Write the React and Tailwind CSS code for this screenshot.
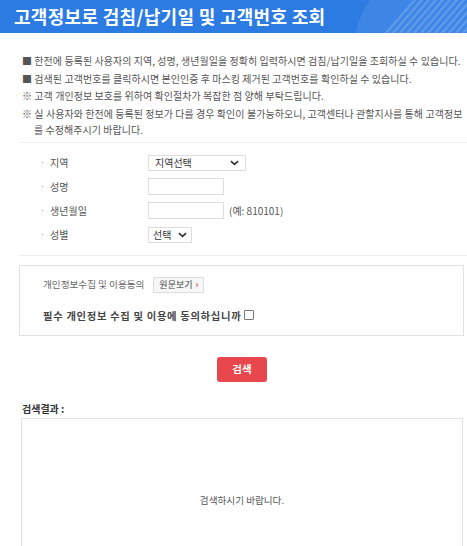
import React from "react";

const font = { fontFamily: '"Noto Sans CJK KR", "Noto Sans", sans-serif' };

function Chevron({ className = "" }) {
  return (
    <svg viewBox="0 0 10 6" className={className} width="9" height="6">
      <path d="M1 1l4 3.5L9 1" fill="none" stroke="#333" strokeWidth="1.8" />
    </svg>
  );
}

function Header() {
  return (
    <div className="relative h-[33px] bg-[#2b7be3] overflow-hidden flex items-center pl-[14px]">
      <svg className="absolute left-0 top-0" width="467" height="33" viewBox="0 0 467 33">
        <circle cx="430" cy="45" r="75" fill="#ffffff" fillOpacity="0.09" />
        <g stroke="#ffffff" strokeOpacity="0.16" strokeWidth="2.5">
          {Array.from({ length: 14 }).map((_, i) => (
            <line key={i} x1={380 + i * 7} y1={40} x2={380 + i * 7 + 40} y2={-6} />
          ))}
        </g>
      </svg>
      <h1 className="relative text-white font-bold text-[18px] tracking-[0.3px]">
        고객정보로 검침/납기일 및 고객번호 조회
      </h1>
    </div>
  );
}

function Notice() {
  return (
    <div className="pt-[19px] pl-[22px] pr-[4px] text-[10px] text-[#555] leading-[17.5px] tracking-[0.05px]">
      <p>■ 한전에 등록된 사용자의 지역, 성명, 생년월일을 정확히 입력하시면 검침/납기일을 조회하실 수 있습니다.</p>
      <p>■ 검색된 고객번호를 클릭하시면 본인인증 후 마스킹 제거된 고객번호를 확인하실 수 있습니다.</p>
      <p>※ 고객 개인정보 보호를 위하여 확인절차가 복잡한 점 양해 부탁드립니다.</p>
      <p className="pl-[12px] -indent-[12px] leading-[16px] mt-[1px] whitespace-nowrap">
        ※ 실 사용자와 한전에 등록된 정보가 다를 경우 확인이 불가능하오니, 고객센터나 관할지사를 통해 고객정보
        <br />를 수정해주시기 바랍니다.
      </p>
    </div>
  );
}

function Row({ label, children }) {
  return (
    <div className="flex items-center h-[24px]">
      <div className="w-[148px] shrink-0 pl-[40px] flex items-center text-[10px] text-[#555]">
        <span className="text-[#999] mr-[5px] text-[9px]">·</span>
        {label}
      </div>
      {children}
    </div>
  );
}

function Form() {
  return (
    <div className="mt-[4px] ml-[20px] border-t border-[#eeeeee] pt-[8px] pb-[8px]">
      <div className="-ml-[20px]">
        <Row label="지역">
          <div className="w-[98px] h-[16px] border border-[#dddddd] flex items-center justify-between px-[6px] text-[10px] text-[#333]">
            <span>지역선택</span>
            <Chevron />
          </div>
        </Row>
        <Row label="성명">
          <div className="w-[76px] h-[17px] border border-[#dddddd]" />
        </Row>
        <Row label="생년월일">
          <div className="w-[76px] h-[17px] border border-[#dddddd]" />
          <span className="ml-[5px] text-[10px] text-[#555]">(예: 810101)</span>
        </Row>
        <Row label="성별">
          <div className="w-[44px] h-[16px] border border-[#dddddd] flex items-center justify-between px-[4px] text-[10px] text-[#333]">
            <span>선택</span>
            <Chevron />
          </div>
        </Row>
      </div>
    </div>
  );
}

function Consent() {
  return (
    <div className="ml-[20px] border-t border-[#eeeeee] pt-[9px]">
      <div className="-ml-px mr-[3px] h-[71px] border border-[#e2e2e2] pl-[23px] pt-[11px]">
        <div className="flex items-center h-[16px] text-[9.6px] text-[#666]">
          <span>개인정보수집 및 이용동의</span>
          <span className="ml-[9px] w-[51px] h-[16px] justify-center border border-[#dddddd] bg-[#f7f7f7] flex items-center text-[9px] text-[#444]">
            원문보기
            <span className="ml-[3px] text-[#e04040] text-[9px] font-bold">›</span>
          </span>
        </div>
        <div className="mt-[15px] flex items-center text-[10.3px] font-bold text-[#444] tracking-[0.7px]">
          <span>필수 개인정보 수집 및 이용에 동의하십니까</span>
          <span className="ml-[3px] w-[10px] h-[10px] border border-[#777] rounded-[1px] bg-white" />
        </div>
      </div>
    </div>
  );
}

export default function App() {
  return (
    <div className="w-[467px] h-[546px] bg-white overflow-hidden" style={font}>
      <Header />
      <Notice />
      <Form />
      <Consent />
      <div className="flex justify-center mt-[21px] pl-[17px]">
        <button className="w-[50px] h-[25px] rounded-[3px] bg-[#e8474d] text-white text-[10.5px] font-bold">
          검색
        </button>
      </div>
      <div className="mt-[19px] ml-[22px] text-[10px] font-bold text-[#333]">검색결과 :</div>
      <div className="mt-[2px] ml-[21px] mr-[4px] h-[200px] border border-[#e2e2e2] flex justify-center pt-[74px] text-[9.6px] text-[#555]">
        검색하시기 바랍니다.
      </div>
    </div>
  );
}
